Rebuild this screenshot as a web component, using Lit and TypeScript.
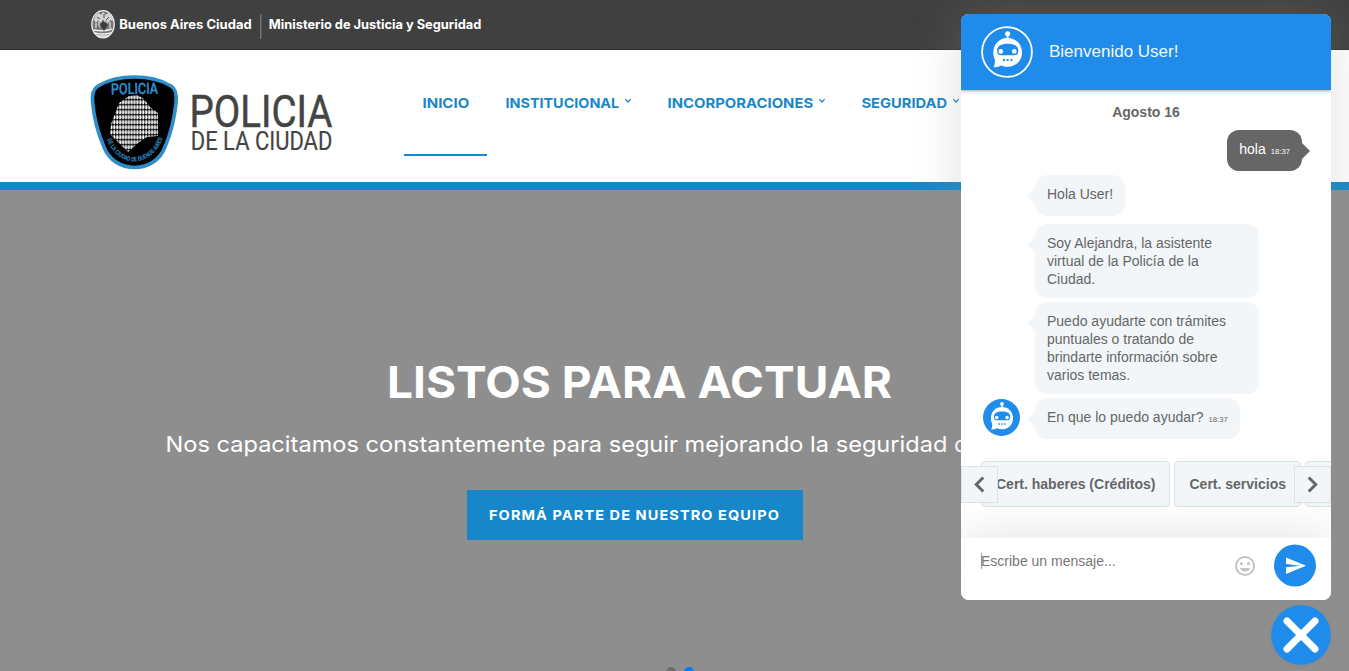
import { LitElement, html, css, svg } from "lit";
import { customElement } from "lit/decorators.js";

const robot = (fill: string, bg: string) => svg`
  <g transform="translate(.6 .4)">
  <path d="M-1 -13h2v-5h-2z" fill=${fill}/>
  <circle cx="0" cy="-18.600" r="2.500" fill=${fill}/>
  <path d="M0 -14.500C8.300 -14.500 14.400 -8.200 14.400 0C14.400 8.200 8.300 14.400 0 14.400C-2.400 14.400 -4.600 13.900 -6.500 13C-9 14.400 -11.600 14.900 -14 14.700C-12.900 12.500 -12.600 10 -12.600 7.500C-13.700 5.300 -14.300 2.800 -14.300 0C-14.300 -8.200 -8.300 -14.500 0 -14.500Z" fill=${fill}/>
  <path d="M-10.500 -1.600C-10.500 -6.400 -6.800 -8.600 0 -8.600S10.700 -6.400 10.700 -1.600C10.700 1.600 9.300 2.800 6.500 2.800H-6.300C-9.200 2.800 -10.500 1.600 -10.500 -1.600Z" fill=${bg}/>
  <circle cx="-6.800" cy="-1" r="2.300" fill=${fill}/><circle cx="6.700" cy="-1" r="2.300" fill=${fill}/>
  <path d="M-4.700 6.500h2v2h-2zM-1 6.500h2v2h-2zM2.800 6.500h2v2h-2z" fill=${bg}/>
  </g>`;

@customElement("site-brand")
class SiteBrand extends LitElement {
  static styles = css`:host{display:block;width:260px;height:110px} svg{display:block}`;
  render() {
    return html`<svg width="260" height="110" viewBox="80 65 260 110">
      <defs>
        <pattern id="people" width="2.9" height="5" patternUnits="userSpaceOnUse">
          <rect width="2.9" height="5" fill="#000"/>
          <path d="M.3 .3h1.800v4h-1.800z" fill="#fff"/>
          <path d="M2.100 1.500h.8v1.200h-.8z" fill="#bbb"/>
        </pattern>
        <path id="arc" d="M107 139.500C112 153 122 161 134 161.500C147 160.500 158 153 163 137"/>
      </defs>
      <path d="M134.500 77C149 77 162 80.500 171 86C176 89 177 95 176 103C174.500 118 171 133 165 147C160 160 148 167.500 134.500 167.500C121 167.500 109 160 104 147C98 133 94 118 92.700 103C91.700 95 93 89 98 86C107 80.500 120 77 134.500 77Z" fill="#000" stroke="#2e8ecb" stroke-width="3.600"/>
      <g transform="rotate(-1 134 89)"><text x="111" y="94" font-family="Roboto" font-weight="500" font-size="15.500" textLength="47" lengthAdjust="spacingAndGlyphs" fill="#2e8ecb" stroke="#2e8ecb" stroke-width=".3">POLICIA</text></g>
      <path d="M129 96L137 95L144 99L150 107L158 113L158 136L147 137L138 143L128 152L121 145L110 134L111 124L116 111L119 103Z" fill="url(#people)"/>
      <text font-family="Roboto" font-weight="700" font-size="6.200" fill="#2e8ecb"><textPath href="#arc" textLength="76" lengthAdjust="spacingAndGlyphs">DE LA CIUDAD DE BUENOS AIRES</textPath></text>
      <g font-family="Roboto" fill="#444" stroke="#444">
        <text x="189.500" y="126.500" font-size="45" stroke-width=".5" textLength="143" lengthAdjust="spacingAndGlyphs">POLICIA</text>
        <text x="190.800" y="149.500" font-size="25" stroke-width=".2" textLength="141.500" lengthAdjust="spacingAndGlyphs">DE LA CIUDAD</text>
      </g>
    </svg>`;
  }
}

@customElement("top-bar")
class TopBar extends LitElement {
  static styles = css`:host{display:block;height:49px;background:#404040;border-bottom:1px solid #333} svg{display:block}`;
  render() {
    return html`<svg width="520" height="49">
      <ellipse cx="103" cy="24.300" rx="11.200" ry="13.600" fill="#777" stroke="#f2f2f2" stroke-width="1.300"/>
      <path d="M94 20q1-6 5-7l2 2 2-3 3 3 2-2q4 2 5 8l-3-1-1 3-3-3-1 3-2-4-2 4-3-3-2 3z" fill="#d5d5d5"/>
      <path d="M94 30q9 2 18-1M94 33q9 2 17 0M97 36h12" fill="none" stroke="#f2f2f2" stroke-width="1.500"/>
      <path d="M96 23v5M99 21v7M110 22v6M107 21v3" stroke="#ddd" stroke-width="1.200"/>
      <path d="M100 25l3-4 3 2 2 1-2 4-2 3-2-3z" fill="#3c3c3c"/>
      <path d="M97 17l3 2M104 14v4M109 17l-3 3M98 26v3" stroke="#444" stroke-width="1"/>
      <g font-family="Inter" font-weight="700" font-size="12.700" fill="#fff">
        <text x="119.200" y="29" textLength="132.500" lengthAdjust="spacingAndGlyphs">Buenos Aires Ciudad</text>
        <text x="268.800" y="29" textLength="212.500" lengthAdjust="spacingAndGlyphs">Ministerio de Justicia y Seguridad</text>
      </g>
      <path d="M260.800 14v25" stroke="#8a8a8a" stroke-width="1"/>
    </svg>`;
  }
}

@customElement("main-nav")
class MainNav extends LitElement {
  static styles = css`
    :host{display:block}
    .nav{display:flex;color:#1787c9;white-space:nowrap}
    .item{display:flex;height:63px;padding:0 18px;border-bottom:2px solid transparent;box-sizing:border-box}
    .active{border-color:#1787c9}
    .chev{margin:5px 0 0 6px}
    .label{display:block}
    .spaced{fill:#1787c9;font:700 13.600px Inter,sans-serif}
  `;
  items: [string, number, boolean][] = [["INICIO", 47, false], ["INSTITUCIONAL", 114, true], ["INCORPORACIONES", 146, true], ["SEGURIDAD", 86, true]];
  render() {
    return html`<nav class="nav">${this.items.map(([t, w, drop], i) => html`
      <div class="item ${i === 0 ? "active" : ""}">
        <svg class="label" width=${w} height="20"><text class="spaced" x=".5" y="15" textLength=${w - .3} lengthAdjust="spacingAndGlyphs">${t}</text></svg>
        ${drop ? html`<svg class="chev" width="6" height="6" viewBox="0 0 6 6"><path d="M.3 1.200L3 4 5.700 1.200" fill="none" stroke="#1787c9" stroke-width="1.300"/></svg>` : ""}
      </div>`)}</nav>`;
  }
}

@customElement("hero-slide")
class HeroSlide extends LitElement {
  static styles = css`
    :host{display:flex;flex-direction:column;height:481px;background:#8e8e8e;color:#fff;overflow:hidden}
    svg{display:block;flex:none}
    .title{margin:165px 0 0 380px}
    .sub{margin:15px 0 0 160px}
    .cta{margin:25px 0 0 467px;width:336px;height:50px;background:#1787c9}
    .dots{display:flex;flex:none;gap:8px;margin:127px 0 0 666px}
    .dot{width:10px;height:10px;border-radius:50%;background:#6c6c6c}
    .on{background:#007aff}
    text{fill:#fff;font-family:Inter,sans-serif}
  `;
  render() {
    return html`
      <svg class="title" width="530" height="56"><text x="7" y="43.200" font-size="44.500" font-weight="700" textLength="505" lengthAdjust="spacingAndGlyphs">LISTOS PARA ACTUAR</text></svg>
      <svg class="sub" width="1000" height="39"><text x="5.500" y="26" font-size="22" textLength="928" lengthAdjust="spacingAndGlyphs">Nos capacitamos constantemente para seguir mejorando la seguridad de la Ciudad</text></svg>
      <svg class="cta"><text x="22" y="30" font-size="13.500" font-weight="700" textLength="291" lengthAdjust="spacingAndGlyphs" letter-spacing="1">FORMÁ PARTE DE NUESTRO EQUIPO</text></svg>
      <div class="dots"><i class="dot"></i><i class="dot on"></i></div>`;
  }
}

@customElement("chat-window")
class ChatWindow extends LitElement {
  static styles = css`
    :host{display:flex;flex-direction:column;width:370px;height:586px;border-radius:8px;overflow:hidden;background:#fff;color:#666;font:14px/18px "Liberation Sans",Arial,sans-serif}
    svg{display:block;flex:none}
    .head{height:76px;flex:none;display:flex;align-items:center;padding-left:19px;gap:15px;background:#1f8ceb;color:#fff;font-size:17px;box-shadow:0 1px 3px rgba(0,0,0,.35);z-index:1}
    .name{opacity:.95}
    .log{height:448px;flex:none;display:flex;flex-direction:column;align-items:flex-start;overflow:hidden}
    .date{align-self:center;font-weight:700;margin:13px 0 9px}
    .bubble{position:relative;box-sizing:border-box;min-height:41px;max-width:224px;margin:0 0 4px 74px;padding:10px 12px;border-radius:12px;background:#f2f6f9}
    .bubble::before{content:"";position:absolute;left:-8px;top:13px;border:8px solid transparent;border-left:0;border-right-color:#f2f6f9}
    .me{align-self:flex-end;margin-right:29px;background:#666;color:#fff}
    .me::before{left:auto;right:-8px;border:8px solid transparent;border-right:0;border-left-color:#666}
    .gap{margin-bottom:8px}
    .time{font-size:7.700px;margin-left:5px}
    .last{display:flex;align-items:flex-start}
    .last .bubble{margin:0 0 0 15px}
    .last svg{margin:1px 0 0 22px}
    .options{position:relative;display:flex;gap:4px;width:100%;height:46px;margin-top:22px;padding-left:20px;box-sizing:border-box;overflow:hidden;flex:none}
    .opt{flex:none;box-sizing:border-box;height:46px;padding:13px 14px;border:1px solid #dae3e6;border-radius:4px;background:#f2f6f9;font-weight:700;white-space:nowrap}
    .arrow{position:absolute;top:5px;left:0;width:37px;height:37px;box-sizing:border-box;border:1px solid #dae3e6;background:#f2f6f9}
    .next{left:auto;right:0}
    .compose{height:62px;flex:none;display:flex;background:#fff;box-shadow:0 0 50px rgba(0,0,0,.12);z-index:1}
    .field{width:253px;padding:14px 0 0 20px;box-sizing:border-box;flex:none;color:#777}
    .caret{display:inline-block;width:1px;height:16px;background:#999;vertical-align:-3px;margin-right:-1px}
    .smile{margin:18px 0 0 21px}
    .send{margin:6px 0 0 19px}
  `;
  render() {
    return html`
      <div class="head"><svg width="54" height="54" viewBox="-27 -27 54 54"><circle r="24.900" fill="none" stroke="#fff" stroke-width="1.800"/>${robot("#fff", "#1f8ceb")}</svg><span class="name">Bienvenido User!</span></div>
      <div class="log">
        <div class="date">Agosto 16</div>
        <div class="bubble me">hola<span class="time">18:37</span></div>
        <div class="bubble gap">Hola User!</div>
        <div class="bubble">Soy Alejandra, la asistente virtual de la Policía de la Ciudad.</div>
        <div class="bubble">Puedo ayudarte con trámites puntuales o tratando de brindarte información sobre varios temas.</div>
        <div class="last"><svg width="37" height="37" viewBox="-24 -24.500 48 48"><circle cy="-.5" r="24" fill="#1f8ceb"/>${robot("#fff", "#1f8ceb")}</svg>
          <div class="bubble">En que lo puedo ayudar?<span class="time">18:37</span></div></div>
        <div class="options">
          <div class="opt">Cert. haberes (Créditos)</div><div class="opt">Cert. servicios</div><div class="opt"></div>
          <svg class="arrow" viewBox="0 0 35 35"><path d="M21.300 10.500L14.300 17.500L21.300 24.500" fill="none" stroke="#666" stroke-width="3"/></svg>
          <svg class="arrow next" viewBox="0 0 35 35"><path d="M13.700 10.500L20.700 17.500L13.700 24.500" fill="none" stroke="#666" stroke-width="3"/></svg>
        </div>
      </div>
      <div class="compose">
        <div class="field"><i class="caret"></i>Escribe un mensaje...</div>
        <svg class="smile" width="20" height="20" viewBox="0 0 20 20"><circle cx="10" cy="10" r="9" fill="none" stroke="#c3c3c3" stroke-width="2"/><circle cx="6.500" cy="7.500" r="1.500" fill="#c3c3c3"/><circle cx="13.500" cy="7.500" r="1.500" fill="#c3c3c3"/><path d="M4.900 12h10.200Q13.600 15.500 10 15.500T4.900 12z" fill="#c3c3c3"/></svg>
        <svg class="send" width="42" height="43"><circle cx="21" cy="21.500" r="21" fill="#1f8ceb"/><path d="M12 13.500L32 21.700L12 30V23.300L26 21.700L12 20.100z" fill="#fff"/></svg>
      </div>`;
  }
}

@customElement("app-root")
class AppRoot extends LitElement {
  static styles = css`
    :host{display:block;position:relative;width:1349px;height:671px;overflow:hidden;background:#fff}
    .header{display:flex;height:132px;border-bottom:8px solid #1787c9}
    .brand{margin:15px 0 0 80px}
    .menu{margin:43px 0 0 64px}
    .chat{position:absolute;left:961px;top:14px;border-radius:8px;box-shadow:0 0 50px rgba(142,142,142,.28)}
    .close{position:absolute;left:1271px;top:605px;border-radius:50%;box-shadow:0 1px 4px rgba(0,0,0,.05)}
  `;
  render() {
    return html`
      <top-bar></top-bar>
      <div class="header"><site-brand class="brand"></site-brand><main-nav class="menu"></main-nav></div>
      <hero-slide></hero-slide>
      <chat-window class="chat"></chat-window>
      <svg class="close" width="60" height="60"><circle cx="30" cy="30" r="30" fill="#1f8ceb"/><path d="M16 16L44 44M44 16L16 44" stroke="#fff" stroke-width="7" stroke-linecap="round"/></svg>`;
  }
}
